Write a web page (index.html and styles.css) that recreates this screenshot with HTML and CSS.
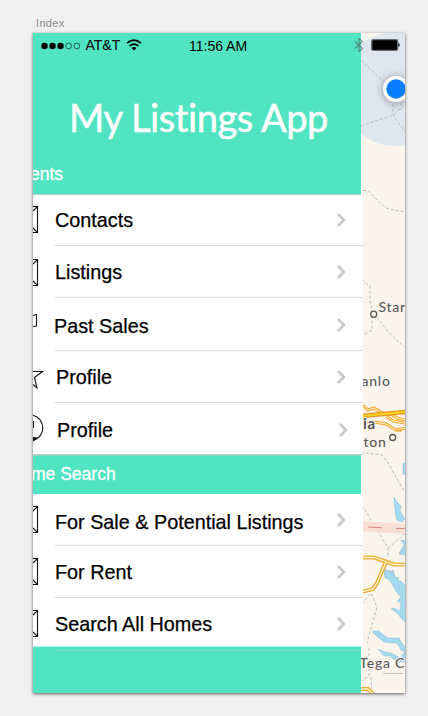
FILE: index.html
```html
<!DOCTYPE html>
<html lang="en">
<head>
<meta charset="utf-8">
<title>Index</title>
<link rel="stylesheet" href="styles.css">
</head>
<body>
<div class="label">Index</div>
<div class="phone">
  <svg class="map" viewBox="361 33 45 660" aria-hidden="true">
    <rect x="361" y="33" width="45" height="660" fill="#f9f5ed"/>
    <ellipse cx="396" cy="89" rx="57" ry="57" fill="#dfe7ee"/>
    <g fill="none" stroke="#bdbdbd" stroke-width="1" stroke-dasharray="3 2">
      <path d="M361 60L384 82M361 126L393 115L406 104M393 104V115L405 132M401 103V110"/>
      <path d="M363 190.500H368L377 200L386 208L396 210.500L404 211.500M362 279L370 287V300L372 311V330L362 336M377 317Q388 334 405 347"/>
      <path d="M361 451L366 453L382 455L388 463L404 491M362 505L388 548L405 534M388 548V557M362 604L371 593L377 607L371 628L367 643M369 648V676L362 681M371 677L372 692"/>
    </g>
    <path d="M361 521L406 524V534L361 531Z" fill="#f8ded5"/>
    <path d="M361 526.500H363M368 527L382 527.800M396 528.500H406" stroke="#d98a7c" fill="none"/>
    <g fill="#a3d9f1" stroke="#8cb8c8" stroke-width=".5">
      <path d="M406 463L403 463V474L406 475Z"/>
      <path d="M394 497L397 502L401 506L400 511L405 519L402 522L397 520L395 511Z"/>
      <path d="M406 541L401 540L404 545L399 554L406 555Z"/>
      <path d="M384 565L386 571L390 573L393 570L395 577L399 578L396 581L390 578L385 578Z"/>
      <path d="M384 570L391 571L396 579L402 582L406 586V623L401 618L397 613L391 609L394 608L400 611L401 603L397 601L401 597L396 591L391 582L385 576Z"/>
      <path d="M373 631L379 631L382 634L388 638L399 638L401 642L406 648V652L401 650L397 643L391 643L384 642L378 637L373 633Z"/>
      <path d="M378 649L385 652L391 653L400 658L406 650V662L397 662L390 656L384 656Z"/>
    </g>
    <g fill="none">
      <path d="M361 404L368 410L374 408L384 414L391 414L397 418L406 420M361 423L374 422L386 424L396 430L406 428M386 416L393 421L405 423" stroke="#f4ab36" stroke-width="3"/>
      <path d="M361 404L368 410L374 408L384 414L391 414L397 418L406 420M361 423L374 422L386 424L396 430L406 428M386 416L393 421L405 423" stroke="#fff6cc"/>
      <path d="M361 416L406 412" stroke="#e99325" stroke-width="4.500"/>
      <path d="M361 416L406 412" stroke="#ffd51e" stroke-width="2"/>
      <path d="M361 557.500H374L387 562L394 564.500H406M386 562L377 583L373 589L361 592M361 689L368 689L373 694" stroke="#f4ad35" stroke-width="4"/>
      <path d="M361 557.500H374L387 562L394 564.500H406M386 562L377 583L373 589L361 592M361 689L368 689L373 694" stroke="#fff5c9" stroke-width="1.300"/>
      <path d="M383 673.500H403" stroke="#c4c4c4"/>
      <path d="M396 430.500H402" stroke="#f4ab36" stroke-width="2"/>
    </g>
    <g fill="#f9f5ed" stroke="#555" stroke-width="1.300">
      <circle cx="373.700" cy="314.200" r="3"/>
      <circle cx="392.700" cy="437.500" r="3"/>
    </g>
    <g class="towns">
      <text x="378.500" y="312">Star</text>
      <text x="361.500" y="386">anlo</text>
      <text class="bold" x="363" y="429">ia</text>
      <text x="363.500" y="447">ton</text>
      <text x="359.500" y="668">Tega C</text>
    </g>
    <circle class="pin" cx="396" cy="89" r="13" fill="#fff"/>
    <circle cx="396" cy="89" r="9.700" fill="#087cff"/>
  </svg>

  <nav class="menu">
    <header class="header">
      <h1 class="title">My Listings App</h1>
      <h2 class="section-title">ents</h2>
    </header>
    <ul class="list">
      <li class="row contacts">
        <svg class="icon" viewBox="0 0 22 50"><path d="M0 11.500H4.500V37.500H0M0 16L4.500 11.500M0 33L4.500 37.500"/></svg>
        <span class="name">Contacts</span>
        <svg class="chevron" viewBox="0 0 10 16"><path d="M1 2L7 8L1 14"/></svg>
      </li>
      <li class="row listings">
        <svg class="icon" viewBox="0 0 22 50"><path d="M0 13.500H4.500V39.500H0M0 18L4.500 13.500M0 35L4.500 39.500"/></svg>
        <span class="name">Listings</span>
        <svg class="chevron" viewBox="0 0 10 16"><path d="M1 2L7 8L1 14"/></svg>
      </li>
      <li class="row sales">
        <svg class="icon" viewBox="0 0 22 50"><path d="M0 17.500L3.500 16.500V28L0 28.500"/></svg>
        <span class="name">Past Sales</span>
        <svg class="chevron" viewBox="0 0 10 16"><path d="M1 2L7 8L1 14"/></svg>
      </li>
      <li class="row star">
        <svg class="icon" viewBox="0 0 22 50"><path d="M0 20.500H9.500L1.500 26.500L4 37L0 33.500"/></svg>
        <span class="name">Profile</span>
        <svg class="chevron" viewBox="0 0 10 16"><path d="M1 2L7 8L1 14"/></svg>
      </li>
      <li class="row person">
        <svg class="icon" viewBox="0 0 22 50"><path d="M0 12.300A13 13 0 0 1 0 37.500M.5 18V25"/><path class="solid" d="M0 34.500L4 35L0 37.800Z"/></svg>
        <span class="name">Profile</span>
        <svg class="chevron" viewBox="0 0 10 16"><path d="M1 2L7 8L1 14"/></svg>
      </li>
    </ul>
    <h2 class="section-title band">me Search</h2>
    <ul class="list">
      <li class="row sale">
        <svg class="icon" viewBox="0 0 22 50"><path d="M0 12.500H4.500V38.500H0M0 17L4.500 12.500M0 34L4.500 38.500"/></svg>
        <span class="name">For Sale &amp; Potential Listings</span>
        <svg class="chevron" viewBox="0 0 10 16"><path d="M1 2L7 8L1 14"/></svg>
      </li>
      <li class="row rent">
        <svg class="icon" viewBox="0 0 22 50"><path d="M0 12.500H4.500V38.500H0M0 17L4.500 12.500M0 34L4.500 38.500"/></svg>
        <span class="name">For Rent</span>
        <svg class="chevron" viewBox="0 0 10 16"><path d="M1 2L7 8L1 14"/></svg>
      </li>
      <li class="row homes">
        <svg class="icon" viewBox="0 0 22 50"><path d="M0 12.500H4.500V38.500H0M0 17L4.500 12.500M0 34L4.500 38.500"/></svg>
        <span class="name">Search All Homes</span>
        <svg class="chevron" viewBox="0 0 10 16"><path d="M1 2L7 8L1 14"/></svg>
      </li>
    </ul>
    <div class="footer"></div>
  </nav>

  <div class="status">
    <svg class="signal" viewBox="0 0 40 10"><circle cx="3.500" cy="5" r="3.200"/><circle cx="11.500" cy="5" r="3.200"/><circle cx="19.500" cy="5" r="3.200"/><g fill="none" stroke="#16493d" stroke-width=".8"><circle cx="27.600" cy="5" r="2.900"/><circle cx="35.800" cy="5" r="2.900"/></g></svg>
    <span class="carrier">AT&amp;T</span>
    <svg class="wifi" viewBox="0 0 16 12"><g fill="none" stroke="#000" stroke-width="1.600"><path d="M1 4.200Q8 -1.900 15 4.200"/><path d="M3.500 7Q8 3.200 12.500 7"/></g><path d="M5.500 9Q8 7 10.500 9L8 11.500Z"/></svg>
    <span class="time">11:56 AM</span>
    <svg class="bluetooth" viewBox="0 0 10 14"><path d="M1 3.500L8.500 10.500L5 13.500V.5L8.500 3.500L1 10.500"/></svg>
    <svg class="battery" viewBox="0 0 30 12"><rect x=".7" y=".7" width="26" height="10.600" rx="1.500" fill="#000" stroke="#666c70" stroke-width="1.300"/><path d="M27.400 4Q28.700 4.500 28.700 6T27.400 8Z"/></svg>
  </div>
</div>
</body>
</html>
```

FILE: styles.css
```css
* { box-sizing: border-box; }
body {
  margin: 0;
  height: 716px;
  padding: 16px 0 0 33px;
  background: #f0f0f0;
  font-family: "Liberation Sans", Arial, sans-serif;
  overflow: hidden;
}
.label {
  height: 17px;
  padding-left: 3px;
  font-size: 11px;
  line-height: 15px;
  letter-spacing: .35px;
  color: #8b8b8b;
}
.phone {
  position: relative;
  width: 372px;
  height: 660px;
  overflow: hidden;
  background: #f9f5ed;
}
body::after {
  content: "";
  position: absolute;
  left: 33px;
  top: 33px;
  width: 372px;
  height: 660px;
  box-shadow: 0 1px 3px rgba(0, 0, 0, .6);
  pointer-events: none;
}
.map {
  position: absolute;
  left: 328px;
  top: 0;
  width: 45px;
  height: 660px;
}
.towns {
  font-family: Lato, sans-serif;
  font-size: 14px;
  font-weight: 500;
  letter-spacing: .75px;
  fill: #5c5c5c;
  stroke: #f9f5ed;
  stroke-width: 2px;
  paint-order: stroke;
}
.towns .bold { font-weight: 700; font-size: 15px; fill: #555; }
.pin { filter: drop-shadow(0 1px 4px rgba(0, 0, 0, .4)); }

.menu { position: relative; width: 330px; }
.header, .band, .footer { width: 328px; background: #50e4c2; }
.header { height: 162px; padding-top: 59px; overflow: hidden; border-bottom: 1px solid #a5d9cc; }
.title {
  margin: 0;
  padding-left: 36px;
  height: 72px;
  font: 400 38px/50px Lato, sans-serif;
  letter-spacing: -.42px;
  color: #fff;
  white-space: nowrap;
  -webkit-text-stroke: .5px #fff;
}
.section-title {
  margin: 0 0 0 -3px;
  font-size: 17.5px;
  font-weight: 400;
  line-height: 20px;
  color: #fff;
  -webkit-text-stroke: .3px #fff;
}
.band {
  width: 331px;
  height: 39px;
  margin: 0 0 0 -3px;
  padding: 8px 0 0 1px;
  border-top: 1px solid #8bd5c3;
}
.footer { height: 47px; padding: 3px 0 0 22px; border-top: 1px solid #b9eee1; }
.footer::before { content: ""; display: block; height: 1px; background: #83d9c5; }

.list { margin: 0; padding: 0; list-style: none; background: #fff; }
.row {
  display: flex;
  align-items: flex-start;
  height: 52px;
  background: linear-gradient(#d9d9d9, #d9d9d9) 22px 100% / 100% 1px no-repeat;
}
.icon { width: 22px; height: 50px; flex: none; fill: none; stroke: #111; stroke-width: 1.1; }
.icon .solid { fill: #111; }
.name {
  flex: 1;
  padding-top: 14px;
  font-size: 19.8px;
  line-height: 24px;
  color: #000;
  white-space: nowrap;
  -webkit-text-stroke: .25px #000;
}
.chevron {
  width: 10px;
  height: 16px;
  margin: 18px 16px 0 0;
  fill: none;
  stroke: #c7c7cc;
  stroke-width: 2.5;
}
.contacts { height: 51px; }
.contacts .name { padding-top: 13px; }
.contacts .chevron { margin-top: 17px; }
.sales { height: 53px; }
.sales .name { padding-top: 16px; margin-left: -1px; }
.sales .chevron { margin-top: 18.5px; }
.star .name { margin-left: 1px; }
.person { background: linear-gradient(#bcd4cd, #bcd4cd) 0 100% / 100% 1px no-repeat; }
.person .name { padding-top: 15px; margin-left: 2px; }
.person .chevron { margin: 19px 14px 0 0; }
.sale .name { padding-top: 16px; }
.sale .chevron, .rent .chevron { margin-top: 17.5px; }
.homes { height: 48px; background: none; }

.status { position: absolute; left: 0; top: 0; width: 373px; height: 26px; display: flex; align-items: flex-start; font-size: 14px; line-height: 16px; }
.signal { width: 40px; height: 10px; margin: 7.5px 0 0 7.5px; }
.carrier { width: 40px; margin: 4px 0 0 5px; }
.wifi { width: 16px; height: 12px; margin: 6px 0 0 0; }
.time { width: 60px; margin: 5px 0 0 47.5px; white-space: nowrap; }
.bluetooth { width: 10px; height: 14px; margin: 5px 0 0 105px; fill: none; stroke: #4c5a58; stroke-opacity: .6; stroke-width: 1.2; }
.battery { width: 30px; height: 12px; margin: 6px 0 0 6.5px; }
```
